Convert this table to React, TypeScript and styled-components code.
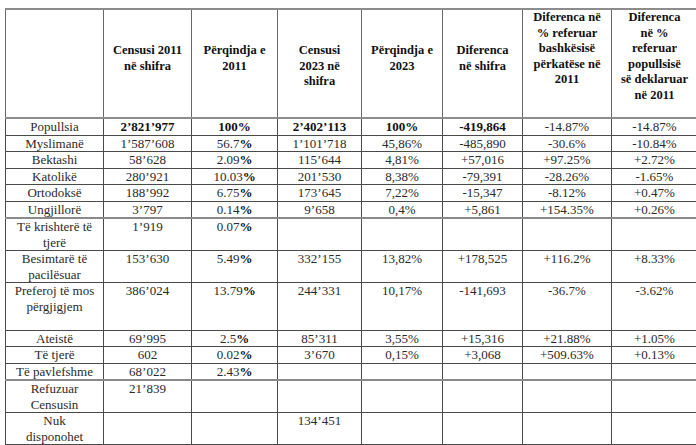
import styled, { createGlobalStyle } from 'styled-components';

const GlobalStyle = createGlobalStyle`
  html, body {
    margin: 0;
    padding: 0;
    background: #ffffff;
    overflow: hidden;
    font-family: "Liberation Serif", "Times New Roman", serif;
  }
`;

const serif = `"Liberation Serif", "Times New Roman", serif`;

const Page = styled.div`
  width: 696px;
  height: 445px;
  padding: 8px 0 0 5px;
  box-sizing: border-box;
  background: #ffffff;
`;

const Table = styled.table`
  width: 692px;
  table-layout: fixed;
  border-collapse: collapse;
  border-top: 2px solid #8c8c8c;
  border-left: 1px solid #6a6a6a;
  font-family: ${serif};
  color: #262626;
`;

const Col = styled.col<{ $w: number }>`
  width: ${(p) => p.$w}px;
`;

const HeadCell = styled.th<{ $top: number }>`
  height: ${(p) => 107 - p.$top}px;
  padding: ${(p) => p.$top}px 2px 0;
  vertical-align: top;
  text-align: center;
  font-family: ${serif};
  font-size: 12.5px;
  line-height: 15.6px;
  font-weight: bold;
  color: #111;
  border: 1px solid #6a6a6a;
  border-bottom: 2px solid #8c8c8c;
`;

const Row = styled.tr<{ $thick?: boolean }>`
  & td {
    border-bottom: ${(p) => (p.$thick ? '2px solid #8a8a8a' : '1px solid #4a4a4a')};
  }
`;

const Cell = styled.td<{ $bold?: boolean }>`
  padding: 0 2px;
  vertical-align: top;
  text-align: center;
  font-family: ${serif};
  font-size: 13px;
  line-height: 15.5px;
  font-weight: ${(p) => (p.$bold ? 'bold' : 'normal')};
  color: ${(p) => (p.$bold ? '#111' : '#2a2a2a')};
  border-left: 1px solid #4a4a4a;
  border-right: 1px solid #4a4a4a;
  white-space: nowrap;
  overflow: hidden;
`;

const Text = styled.div<{ $lines: number }>`
  height: ${(p) => p.$lines * 15.5}px;
`;

const Pct = styled.b`
  font-weight: bold;
  color: #111;
`;

type RowData = {
  label: string[];
  c11?: string;
  p11?: string;
  c23?: string;
  p23?: string;
  diff?: string;
  bash?: string;
  pop?: string;
  bold?: boolean;
  thick?: boolean;
  extra?: number;
};

const rows: RowData[] = [
  { label: ['Popullsia'], c11: '2’821’977', p11: '100%', c23: '2’402’113', p23: '100%', diff: '-419,864', bash: '-14.87%', pop: '-14.87%', bold: true },
  { label: ['Myslimanë'], c11: '1’587’608', p11: '56.7%', c23: '1’101’718', p23: '45,86%', diff: '-485,890', bash: '-30.6%', pop: '-10.84%' },
  { label: ['Bektashi'], c11: '58’628', p11: '2.09%', c23: '115’644', p23: '4,81%', diff: '+57,016', bash: '+97.25%', pop: '+2.72%' },
  { label: ['Katolikë'], c11: '280’921', p11: '10.03%', c23: '201’530', p23: '8,38%', diff: '-79,391', bash: '-28.26%', pop: '-1.65%' },
  { label: ['Ortodoksë'], c11: '188’992', p11: '6.75%', c23: '173’645', p23: '7,22%', diff: '-15,347', bash: '-8.12%', pop: '+0.47%' },
  { label: ['Ungjillorë'], c11: '3’797', p11: '0.14%', c23: '9’658', p23: '0,4%', diff: '+5,861', bash: '+154.35%', pop: '+0.26%', thick: true },
  { label: ['Të krishterë të', 'tjerë'], c11: '1’919', p11: '0.07%' },
  { label: ['Besimtarë të', 'pacilësuar'], c11: '153’630', p11: '5.49%', c23: '332’155', p23: '13,82%', diff: '+178,525', bash: '+116.2%', pop: '+8.33%' },
  { label: ['Preferoj të mos', 'përgjigjem'], c11: '386’024', p11: '13.79%', c23: '244’331', p23: '10,17%', diff: '-141,693', bash: '-36.7%', pop: '-3.62%', extra: 1 },
  { label: ['Ateistë'], c11: '69’995', p11: '2.5%', c23: '85’311', p23: '3,55%', diff: '+15,316', bash: '+21.88%', pop: '+1.05%' },
  { label: ['Të tjerë'], c11: '602', p11: '0.02%', c23: '3’670', p23: '0,15%', diff: '+3,068', bash: '+509.63%', pop: '+0.13%' },
  { label: ['Të pavlefshme'], c11: '68’022', p11: '2.43%', thick: true },
  { label: ['Refuzuar', 'Censusin'], c11: '21’839' },
  { label: ['Nuk', 'disponohet'], c23: '134’451' },
];

const headers: { lines: string[]; top: number }[] = [
  { lines: [''], top: 0 },
  { lines: ['Censusi 2011', 'në shifra'], top: 33 },
  { lines: ['Përqindja e', '2011'], top: 33 },
  { lines: ['Censusi', '2023 në', 'shifra'], top: 33 },
  { lines: ['Përqindja e', '2023'], top: 33 },
  { lines: ['Diferenca', 'në shifra'], top: 33 },
  { lines: ['Diferenca në', '% referuar', 'bashkësisë', 'përkatëse në', '2011'], top: 0 },
  { lines: ['Diferenca', 'në %', 'referuar', 'popullsisë', 'së deklaruar', 'në 2011'], top: 0 },
];

const widths = [98, 88, 86, 84, 81, 80, 89, 86];

function Lines({ lines }: { lines: string[] }) {
  return (
    <>
      {lines.map((line, i) => (
        <span key={i}>
          {i > 0 && <br />}
          {line}
        </span>
      ))}
    </>
  );
}

// the 2011 percentages carry a bold percent sign
function PctValue({ value, bold }: { value?: string; bold?: boolean }) {
  if (!value) return null;
  if (bold) return <>{value}</>;
  return (
    <>
      {value.replace('%', '')}
      <Pct>%</Pct>
    </>
  );
}

function App() {
  return (
    <>
      <GlobalStyle />
      <Page>
        <Table>
          <colgroup>
            {widths.map((w, i) => (
              <Col key={i} $w={w} />
            ))}
          </colgroup>
          <thead>
            <tr>
              {headers.map((h, i) => (
                <HeadCell key={i} $top={h.top}>
                  <Lines lines={h.lines} />
                </HeadCell>
              ))}
            </tr>
          </thead>
          <tbody>
            {rows.map((r, i) => {
              const n = r.label.length + (r.extra ?? 0);
              return (
                <Row key={i} $thick={r.thick}>
                  <Cell>
                    <Text $lines={n}>
                      <Lines lines={r.label} />
                    </Text>
                  </Cell>
                  <Cell $bold={r.bold}>{r.c11}</Cell>
                  <Cell $bold={r.bold}>
                    <PctValue value={r.p11} bold={r.bold} />
                  </Cell>
                  <Cell $bold={r.bold}>{r.c23}</Cell>
                  <Cell $bold={r.bold}>{r.p23}</Cell>
                  <Cell $bold={r.bold}>{r.diff}</Cell>
                  <Cell>{r.bash}</Cell>
                  <Cell>{r.pop}</Cell>
                </Row>
              );
            })}
          </tbody>
        </Table>
      </Page>
    </>
  );
}

export default App;
